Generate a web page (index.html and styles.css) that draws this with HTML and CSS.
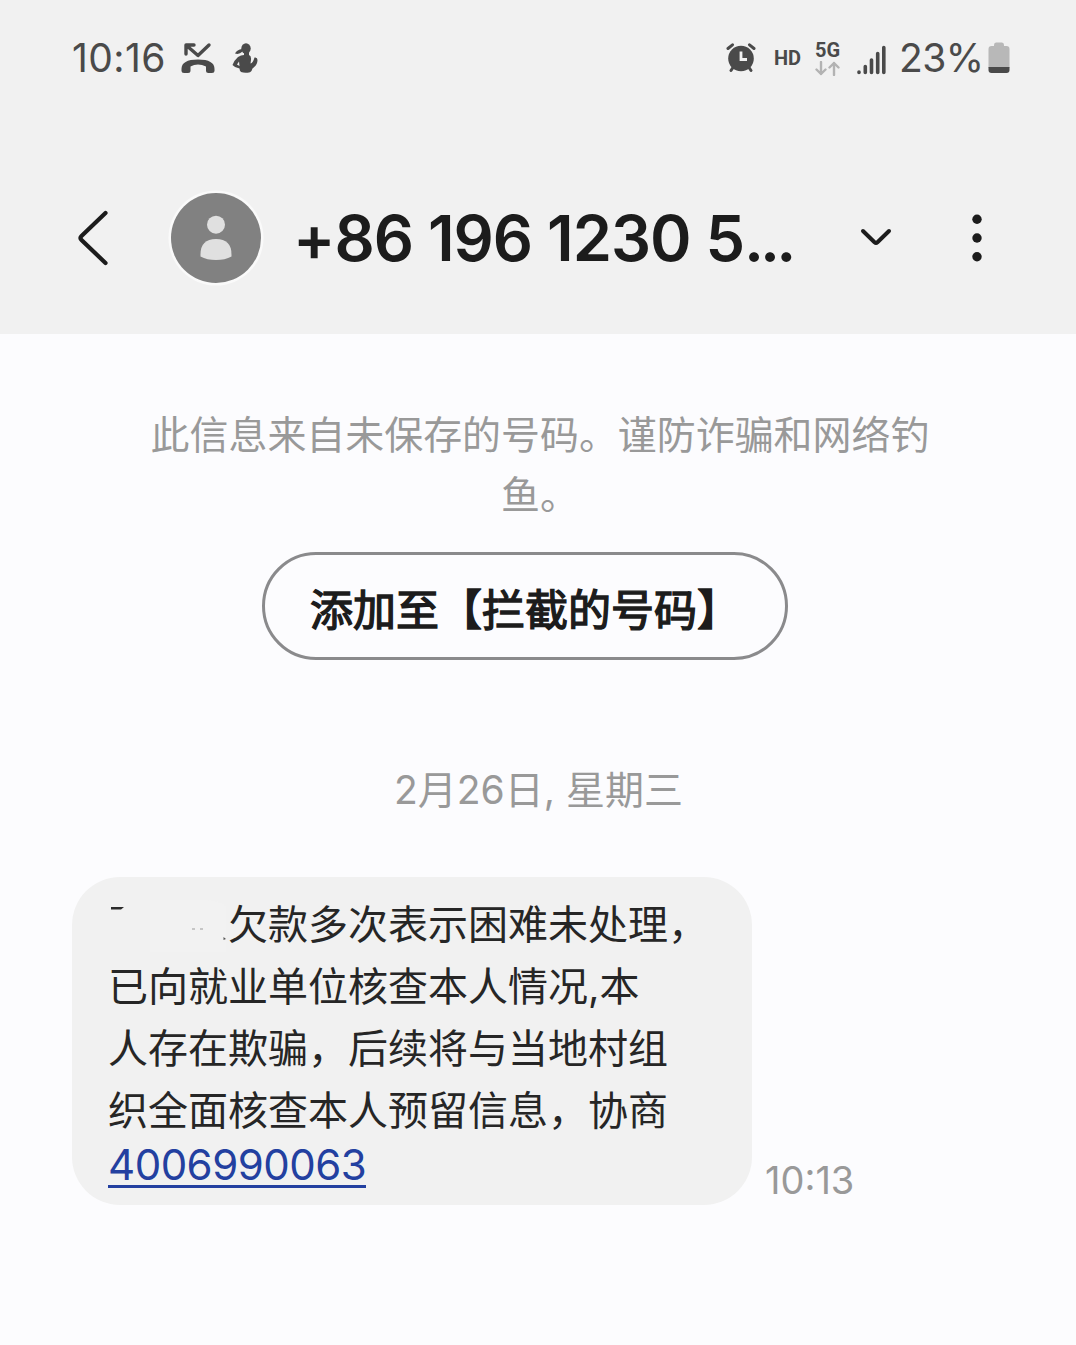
FILE: index.html
```html
<!DOCTYPE html>
<html lang="zh-CN">
<head>
  <meta charset="UTF-8" />
  <meta name="viewport" content="width=device-width, initial-scale=1.0"/>
  <title>+86 196 1230 5...</title>
  <link rel="stylesheet" href="styles.css">
</head>
<body>
  <header class="top">
    <div class="status-bar">
      <span class="clock">10:16</span>
      <svg class="missed-call" width="34" height="32" viewBox="0 0 34 32">
        <path d="M5 12V3H13M5.500 3.500L17 13.500L28 3" fill="none" stroke="#4a4a4a" stroke-width="3.400" stroke-linecap="round" stroke-linejoin="round"/>
        <path d="M0.500 27Q0.500 17.500 17 17.500Q33.500 17.500 33.500 27V29Q33.500 31 31 31H27.500Q25 31 25 28.500V24.500Q21 22.500 17 22.500Q13 22.500 9.500 24.500V28.500Q9.500 31 7 31H3Q0.500 31 0.500 29Z" fill="#4a4a4a"/>
      </svg>
      <svg class="figure" width="26" height="30" viewBox="0 0 26 30">
        <ellipse cx="14" cy="5.500" rx="4.700" ry="5.200" fill="#4a4a4a"/>
        <path d="M3 10.500Q5 6.500 10 6L10.500 8.500Q7 12 3 10.500Z" fill="#4a4a4a"/>
        <path d="M12 9H17V12Q19.500 13 19 17L18.500 20.500Q21 20 22.500 14.500Q25.500 14 25.500 17Q25.500 22 20.500 25.500Q20 28 18 29.200Q13 30.500 9 29Q7.500 27.500 7.500 25.500Q3 25 0.500 22Q2 17.500 6 14Q9 12 12 12Z" fill="#4a4a4a"/>
        <path d="M7 18.500L5 21.500L7.500 23Z" fill="#f1f1f1"/>
      </svg>
      <div class="status-right">
        <svg class="alarm" width="30" height="30" viewBox="0 0 30 30">
          <path d="M2 5.500L6.500 1.800M28 5.500L23.500 1.800M5 27.500L8 23M25 27.500L22 23" stroke="#4a4a4a" stroke-width="3" stroke-linecap="round"/>
          <circle cx="15" cy="15.500" r="12.800" fill="#4a4a4a"/>
          <path d="M15 8.500V16.500H21" fill="none" stroke="#f1f1f1" stroke-width="2.800"/>
        </svg>
        <span class="hd">HD</span>
        <div class="network">
          <span>5G</span>
          <svg width="26" height="15" viewBox="0 0 26 15">
            <path d="M6 1V13M1.500 8.500L6 13L10.500 8.500M19 14V2M14.500 6.500L19 2L23.500 6.500" fill="none" stroke="#b3b3b3" stroke-width="2.400" stroke-linecap="round" stroke-linejoin="round"/>
          </svg>
        </div>
        <svg class="signal" width="30" height="30" viewBox="0 0 30 30">
          <path d="M2 27V27.500M8.300 21.500V27.500M14.500 15V27.500M20.700 8.500V27.500M26.800 2.500V27.500" stroke="#4a4a4a" stroke-width="3.600" stroke-linecap="round"/>
        </svg>
        <span class="percent">23%</span>
        <svg class="battery" width="22" height="32" viewBox="0 0 22 32">
          <path d="M6 3Q6 0.500 8 0.500H14Q16 0.500 16 3V4H18.500Q21.500 4 21.500 7V26H0.500V7Q0.500 4 3.500 4H6Z" fill="#b8b8b8"/>
          <path d="M0.500 25H21.500V28Q21.500 31 18.500 31H3.500Q0.500 31 0.500 28Z" fill="#4a4a4a"/>
        </svg>
      </div>
    </div>

    <div class="contact-bar">
      <svg class="back" width="32" height="56" viewBox="0 0 32 56">
        <path d="M27.500 3L3.500 26Q1.500 28 3.500 30L27.500 53" fill="none" stroke="#1c1c1c" stroke-width="4.200" stroke-linecap="round"/>
      </svg>
      <svg class="avatar" width="96" height="96" viewBox="0 0 96 96">
        <circle cx="48" cy="48" r="47.500" fill="#fafafa"/>
        <circle cx="48" cy="48" r="45" fill="#818181"/>
        <circle cx="48" cy="34.700" r="9" fill="#e0e0e0"/>
        <path d="M32.500 64.500Q32.500 49 48 49Q63.500 49 63.500 64.500V66.500Q57 70 48 70Q39 70 32.500 66.500Z" fill="#e0e0e0"/>
      </svg>
      <h1 class="number">+86 196 1230 5<span class="dots">...</span></h1>
      <svg class="chevron" width="32" height="20" viewBox="0 0 32 20">
        <path d="M3 3L14.500 14.200Q16 15.500 17.500 14.200L29 3" fill="none" stroke="#1c1c1c" stroke-width="4" stroke-linecap="round"/>
      </svg>
      <svg class="more" width="12" height="50" viewBox="0 0 12 50">
        <circle cx="6" cy="6.300" r="4.700" fill="#1c1c1c"/>
        <circle cx="6" cy="25" r="4.700" fill="#1c1c1c"/>
        <circle cx="6" cy="43.700" r="4.700" fill="#1c1c1c"/>
      </svg>
    </div>
  </header>

  <main class="chat">
    <p class="notice">此信息来自未保存的号码。谨防诈骗和网络钓<br>鱼。</p>
    <button class="block-button">添加至【拦截的号码】</button>
    <p class="date">2月26日, 星期三</p>

    <div class="message">
      <div class="bubble">
        <div class="line">
          <svg class="hidden-name" width="120" height="62" viewBox="0 0 120 62">
            <path d="M42 6H98Q110 6 118 12V58H42Z" fill="#f2f2f2"/>
            <path d="M3 13H16L13 15.500H3Z" fill="#2b2b2b"/>
            <path d="M84 35H87M92 35H95" stroke="#c6c6c6" stroke-width="2"/>
            <path d="M115.500 43L118 45L115.500 46Z" fill="#555555"/>
          </svg>欠款多次表示困难未处理，</div>
        <div class="line">已向就业单位核查本人情况,本</div>
        <div class="line">人存在欺骗，后续将与当地村组</div>
        <div class="line">织全面核查本人预留信息，协商</div>
        <a class="phone" href="tel:4006990063">4006990063</a>
      </div>
      <span class="time">10:13</span>
    </div>
  </main>
</body>
</html>
```
FILE: styles.css
```css
body {
  margin: 0;
  min-height: 1345px;
  font-family: Inter, 'Noto Sans CJK SC', sans-serif;
  background-color: #fcfcfe;
  color: #262626;
  box-sizing: border-box;
}

svg {
  display: block;
  flex-shrink: 0;
}

.top {
  height: 334px;
  background-color: #f1f1f1;
}

.status-bar {
  height: 116px;
  padding: 0 66px 0 72px;
  display: flex;
  align-items: center;
  color: #4a4a4a;
}

.clock {
  width: 109px;
  padding-bottom: 2px;
  font-size: 39px;
  letter-spacing: 0.4px;
}

.figure {
  margin-left: 17px;
}

.status-right {
  margin-left: auto;
  display: flex;
  align-items: center;
}

.hd {
  width: 41px;
  margin-left: 18px;
  font-family: Roboto, sans-serif;
  font-size: 20px;
  font-weight: 700;
}

.network {
  width: 42px;
  font-family: Roboto, sans-serif;
  font-size: 20px;
  font-weight: 700;
  line-height: 20px;
}

.network svg {
  margin-top: 1px;
}

.signal {
  margin-top: 3px;
}

.percent {
  width: 89px;
  margin-left: 12px;
  padding-bottom: 2px;
  font-size: 39px;
  letter-spacing: -0.6px;
  white-space: nowrap;
}

.contact-bar {
  height: 190px;
  margin-top: 27px;
  padding: 0 93px 0 78px;
  display: flex;
  align-items: center;
  box-sizing: border-box;
}

.avatar {
  margin-left: 58px;
}

.number {
  flex: 1;
  margin: 0 0 0 29px;
  font-size: 63px;
  font-weight: 600;
  line-height: 80px;
  letter-spacing: -1px;
  color: #1c1c1c;
  white-space: nowrap;
}

.dots {
  letter-spacing: -4px;
}

.more {
  margin-left: 79px;
}

.chat {
  padding: 71px 72px 0;
  display: flex;
  flex-direction: column;
  align-items: center;
}

.notice {
  margin: 0 0 0 4px;
  font-size: 38.95px;
  line-height: 60px;
  text-align: center;
  color: #999999;
  white-space: nowrap;
}

.block-button {
  width: 526px;
  height: 108px;
  margin: 27px 26px 0 0;
  padding: 1px 0 0;
  border: 3px solid #8a8a8c;
  border-radius: 54px;
  background: none;
  font-family: 'Noto Sans CJK SC', sans-serif;
  font-size: 43px;
  font-weight: 400;
  -webkit-text-stroke: 1.4px #1c1c1c;
  color: #1c1c1c;
}

.date {
  margin: 100px 0 0 1px;
  font-size: 39px;
  line-height: 60px;
  color: #999999;
}

.message {
  align-self: flex-start;
  margin-top: 57px;
  display: flex;
  align-items: flex-end;
}

.bubble {
  width: 680px;
  height: 328px;
  padding: 17px 36px 0;
  box-sizing: border-box;
  border-radius: 48px;
  background-color: #f1f1f1;
}

.line {
  display: flex;
  height: 62px;
  font-size: 40px;
  line-height: 62px;
  white-space: nowrap;
}

.phone {
  display: block;
  width: 258px;
  height: 46px;
  font-size: 42px;
  line-height: 46px;
  letter-spacing: -0.5px;
  color: #2340a0;
  text-decoration: none;
  border-bottom: 3px solid #2340a0;
  box-sizing: border-box;
  white-space: nowrap;
}

.time {
  margin: 0 0 0 13px;
  font-size: 38px;
  line-height: 50px;
  color: #999999;
}
```
